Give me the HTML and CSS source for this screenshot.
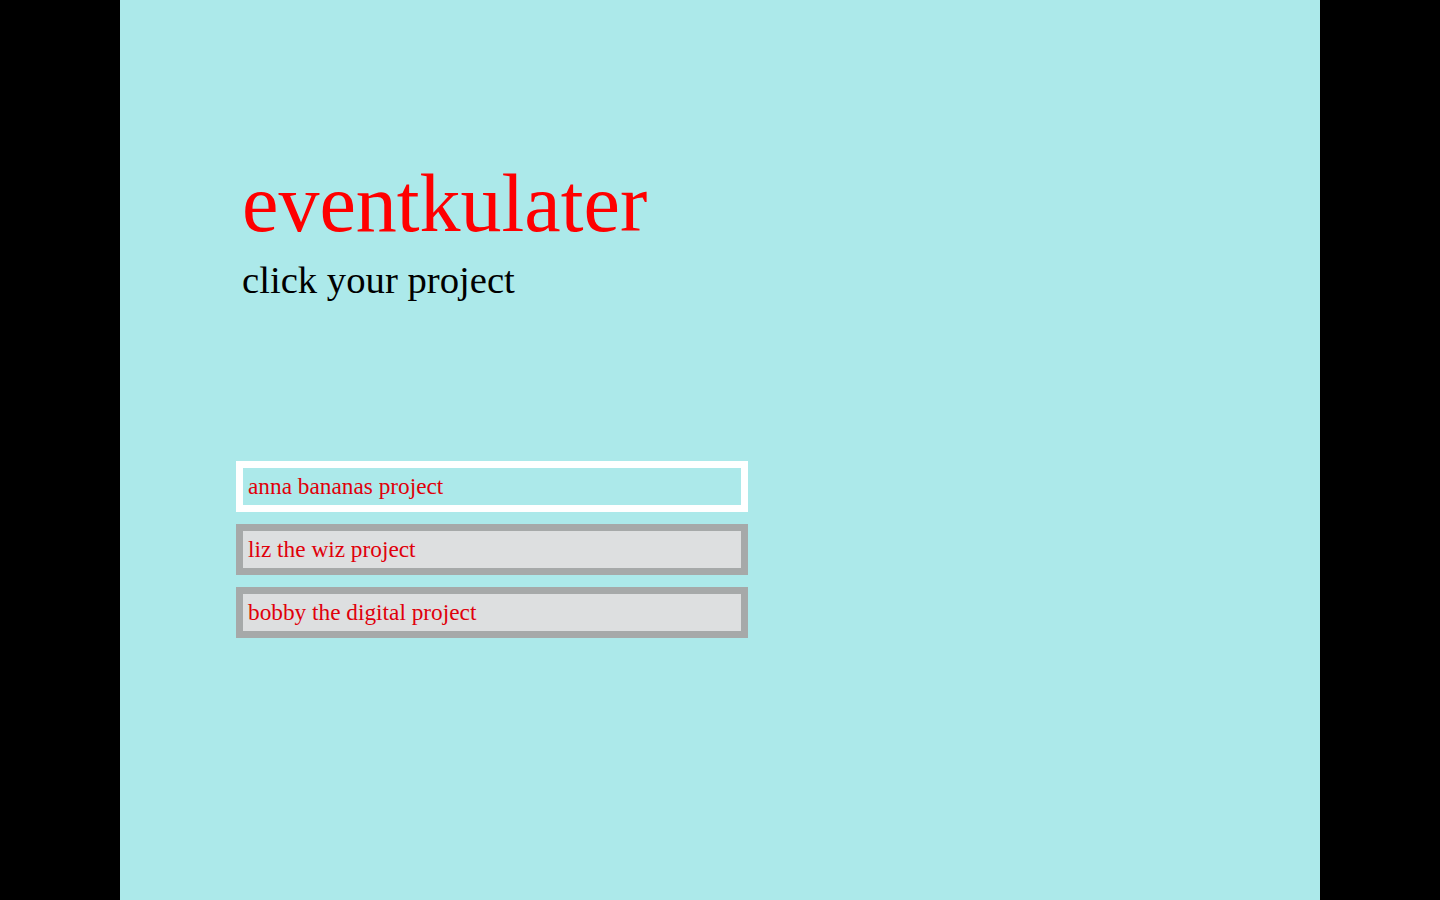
FILE: index.html
```html
<!DOCTYPE html>
<html lang="en">
<head>
<meta charset="utf-8">
<title>eventkulater</title>
<link rel="stylesheet" href="styles.css">
</head>
<body>
<main class="stage">
  <header class="intro">
    <h1 class="title">eventkulater</h1>
    <p class="subtitle">click your project</p>
  </header>
  <ul class="projects">
    <li class="project project--active">anna bananas project</li>
    <li class="project">liz the wiz project</li>
    <li class="project">bobby the digital project</li>
  </ul>
</main>
</body>
</html>
```
FILE: styles.css
```css
html, body {
  margin: 0;
  padding: 0;
  background: #000;
  height: 100%;
}
body {
  font-family: "Liberation Serif", "Times New Roman", serif;
}
.stage {
  width: 1200px;
  height: 900px;
  margin: 0 auto;
  background: #ace9ea;
  box-sizing: border-box;
  padding: 163px 0 0 116px;
  display: flex;
  flex-direction: column;
}
.intro {
  padding-left: 6px;
}
.title {
  margin: 0;
  font-size: 82px;
  line-height: 82px;
  font-weight: normal;
  color: #ff0000;
}
.subtitle {
  margin: 16px 0 0 0;
  font-size: 38.7px;
  line-height: 38px;
  color: #000;
}
.projects {
  list-style: none;
  margin: 162px 0 0 0;
  padding: 0;
  display: flex;
  flex-direction: column;
  gap: 12px;
  width: 512px;
}
.project {
  border: 7px solid #a6a9a9;
  background: #dddfe0;
  color: #e0000b;
  font-size: 23.3px;
  line-height: 33px;
  height: 33px;
  padding: 2px 5px 2px 5px;
  cursor: pointer;
}
.project--active {
  border-color: #ffffff;
  background: #ace9ea;
}
```
